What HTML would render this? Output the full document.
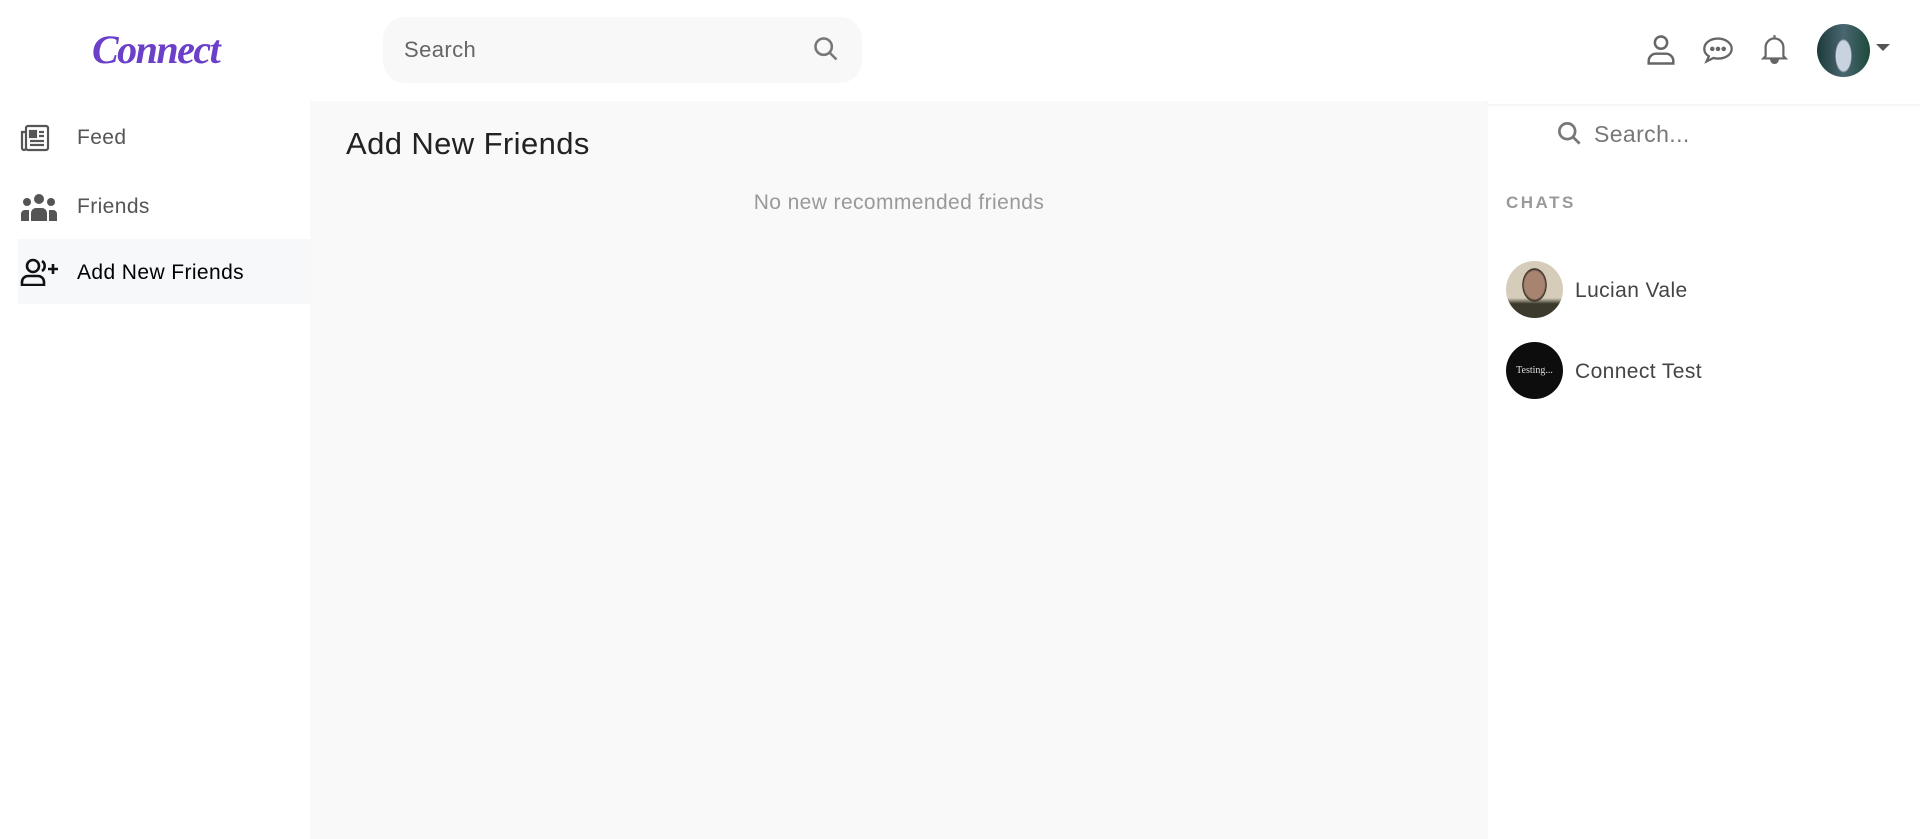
<!DOCTYPE html>
<html><head><meta charset="utf-8"><style>
*{margin:0;padding:0;box-sizing:border-box}
body{width:1920px;height:839px;overflow:hidden;background:#fff;font-family:"Liberation Sans",sans-serif;position:relative}
.a{position:absolute}
.t{letter-spacing:0.4px}
</style></head><body>
<div class="a" style="left:92px;top:26px;font-family:'Liberation Serif',serif;font-style:italic;font-weight:bold;font-size:40px;color:#6b3fc8;letter-spacing:-1.5px">Connect</div>
<div class="a" style="left:383px;top:17px;width:479px;height:66px;border-radius:22px;background:#f8f8f8"></div>
<div class="a t" style="left:404px;top:37px;font-size:22px;color:#666">Search</div>
<svg class="a" style="left:812px;top:35px" width="28" height="28" viewBox="0 0 24 24" fill="none" stroke="#777" stroke-width="2.2"><circle cx="10" cy="10" r="7"/><path d="M15 15l6 6"/></svg>
<svg class="a" style="left:1646px;top:34px" width="30" height="32" viewBox="0 0 24 26" fill="none" stroke="#666" stroke-width="2"><circle cx="12" cy="7" r="5"/><path d="M2 24v-2a6 6 0 0 1 6-6h8a6 6 0 0 1 6 6v2z"/></svg>
<svg class="a" style="left:1702px;top:36px" width="32" height="28" viewBox="0 0 28 24" fill="none" stroke="#666" stroke-width="2"><path d="M14 2C7 2 2 6 2 11c0 3 1.5 5 4 6.5L4 22l6-3c1.3.3 2.6.5 4 .5 7 0 12-4 12-8.5S21 2 14 2z"/><circle cx="9" cy="11" r="1" fill="#666"/><circle cx="14" cy="11" r="1" fill="#666"/><circle cx="19" cy="11" r="1" fill="#666"/></svg>
<svg class="a" style="left:1761px;top:34px" width="27" height="30" viewBox="0 0 24 27" fill="none" stroke="#666" stroke-width="2"><path d="M12 1v2M4 20V12a8 8 0 0 1 16 0v8l2 2H2z"/><path d="M9 23a3 3 0 0 0 6 0" fill="#666"/></svg>
<div class="a" style="left:1817px;top:24px;width:53px;height:53px;border-radius:50%;background:radial-gradient(ellipse 20% 40% at 50% 60%,#c9d3e0 0 70%,transparent 80%),linear-gradient(90deg,#1d3a3a,#4a6670 50%,#1d4a3a)"></div>
<div class="a" style="left:1876px;top:44px;width:0;height:0;border-left:7px solid transparent;border-right:7px solid transparent;border-top:7px solid #555"></div>
<div class="a" style="left:310px;top:101px;width:1178px;height:738px;background:#f9f9f9"></div>
<div class="a" style="left:1488px;top:101px;width:432px;height:3px;box-shadow:0 1px 3px rgba(0,0,0,.08)"></div>
<svg class="a" style="left:20px;top:124px" width="30" height="28" viewBox="0 0 30 28" fill="none" stroke="#555" stroke-width="2.2"><rect x="6" y="2" width="22" height="24" rx="2"/><path d="M6 8H2v16a2 2 0 0 0 4 0"/><rect x="10" y="7" width="6" height="6" fill="#555"/><path d="M19 8h5M19 12h5M10 17h14M10 21h14"/></svg>
<div class="a t" style="left:77px;top:126px;font-size:21px;color:#555">Feed</div>
<svg class="a" style="left:20px;top:193px" width="38" height="28" viewBox="0 0 38 28" fill="#555"><circle cx="19" cy="6" r="5"/><circle cx="7" cy="9" r="4"/><circle cx="31" cy="9" r="4"/><path d="M11 28v-8a5 5 0 0 1 5-5h6a5 5 0 0 1 5 5v8zM1 28v-7a4 4 0 0 1 4-4h4v11zM37 28v-7a4 4 0 0 0-4-4h-4v11z"/></svg>
<div class="a t" style="left:77px;top:195px;font-size:21px;color:#555">Friends</div>
<div class="a" style="left:18px;top:239px;width:292px;height:65px;background:#f7f8fa"></div>
<svg class="a" style="left:20px;top:258px" width="40" height="28" viewBox="0 0 40 28" fill="none" stroke="#111" stroke-width="2.6"><circle cx="13" cy="8" r="6"/><path d="M2 27v-3a6 6 0 0 1 6-6h10a6 6 0 0 1 6 6v3z"/><path d="M22 3a6 6 0 0 1 0 10M33 6v10M28 11h10"/></svg>
<div class="a t" style="left:77px;top:261px;font-size:21px;color:#000">Add New Friends</div>
<div class="a t" style="left:346px;top:126px;font-size:31px;color:#222">Add New Friends</div>
<div class="a t" style="left:310px;width:1178px;top:191px;text-align:center;font-size:21px;color:#999">No new recommended friends</div>
<svg class="a" style="left:1556px;top:120px" width="27" height="27" viewBox="0 0 24 24" fill="none" stroke="#777" stroke-width="2.4"><circle cx="10" cy="10" r="7"/><path d="M15 15l6 6"/></svg>
<div class="a t" style="left:1594px;top:121px;font-size:23px;color:#777">Search...</div>
<div class="a" style="left:1506px;top:193px;font-size:17px;font-weight:bold;letter-spacing:2.5px;color:#999">CHATS</div>
<div class="a" style="left:1506px;top:261px;width:57px;height:57px;border-radius:50%;background:radial-gradient(ellipse 22% 30% at 50% 42%,#a88470 0 80%,#2e2820 95%,transparent 100%),linear-gradient(#d6ccba 65%,#3b3a2c 75%)"></div>
<div class="a t" style="left:1575px;top:279px;font-size:21px;color:#444">Lucian Vale</div>
<div class="a" style="left:1506px;top:342px;width:57px;height:57px;border-radius:50%;background:#0d0d0d;color:#ddd;font-family:'Liberation Serif',serif;font-size:10px;line-height:57px;text-align:center">Testing...</div>
<div class="a t" style="left:1575px;top:360px;font-size:21px;color:#444">Connect Test</div>
</body></html>
